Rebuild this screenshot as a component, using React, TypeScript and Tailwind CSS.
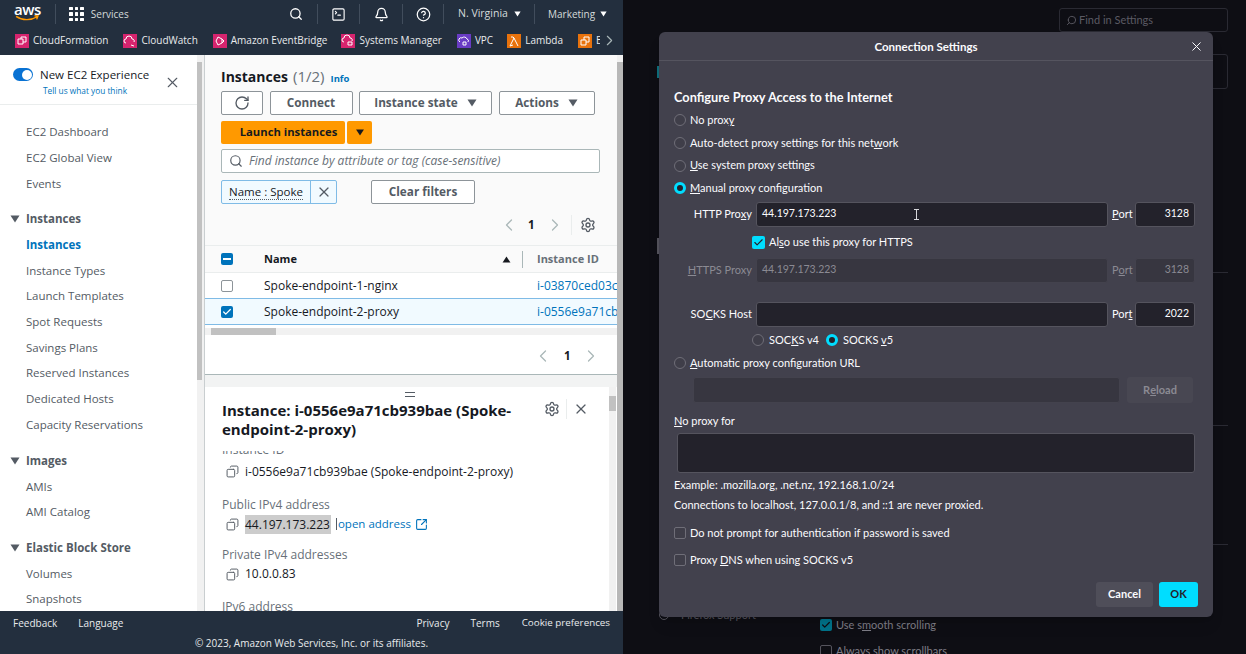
import React from "react";
import { RotateCw, Search, X, ChevronLeft, ChevronRight, Settings, Copy, SquareArrowOutUpRight, SquareTerminal, Bell, CircleHelp, Check } from "lucide-react";

const Caret = ({ className = "" }: { className?: string }) => (
  <svg viewBox="0 0 10 8" className={className} fill="currentColor"><path d="M0.5 0.5h9L5 7.5z" /></svg>
);

const Fav = ({ bg, label, mr = "mr-[15px]", shape }: { bg: string; label: string; mr?: string; shape: string }) => (
  <div className={`flex items-center shrink-0 ${mr}`}>
    <span className={`w-[14px] h-[14px] flex items-center justify-center mr-[4px] ${bg}`}>
      <svg viewBox="0 0 14 14" className="w-[14px] h-[14px]" fill="none" stroke="#fff" strokeWidth="1"><path d={shape} /></svg>
    </span>
    <span>{label}</span>
  </div>
);

const NavItem = ({ t }: { t: string }) => <div className="h-[25.7px] flex items-center pl-[26px] text-[#545b64]">{t}</div>;
const NavHead = ({ t, mt }: { t: string; mt: string }) => (
  <div className={`h-[25.7px] flex items-center pl-[10px] font-bold text-[#545b64] ${mt}`}>
    <Caret className="w-[10px] h-[8px] mr-[6px] text-[#545b64]" />
    {t}
  </div>
);

const Btn = ({ w, children }: { w: string; children: React.ReactNode }) => (
  <div className={`h-[24px] ${w} bg-white border border-[#8d9499] rounded-[2px] flex items-center justify-center font-bold text-[#545b64] text-[11.75px]`}>{children}</div>
);

const Radio = ({ on = false }: { on?: boolean }) =>
  on ? (
    <span className="w-[12px] h-[12px] rounded-full border-[3.5px] border-[#00ddff] bg-[#23222b] shrink-0 inline-block" />
  ) : (
    <span className="w-[12px] h-[12px] rounded-full border border-[#6f6e78] bg-[#3f3e49] shrink-0 inline-block" />
  );

const Chk = () => <span className="w-[12px] h-[12px] rounded-[2px] border border-[#6f6e78] bg-[#3f3e49] shrink-0 inline-block" />;

const Opt = ({ h, children, on }: { h: string; children: React.ReactNode; on?: boolean }) => (
  <div className={`flex items-center gap-[4px] ${h}`}><Radio on={on} /><span>{children}</span></div>
);

const Field = ({ dim, children, right }: { dim?: boolean; children?: React.ReactNode; right?: boolean }) => (
  <div className={`h-full rounded-[3px] border text-[10.5px] flex items-center px-[5px] ${right ? "justify-end" : ""} ${dim ? "bg-[#373640] border-[#43424d] text-[#8b8a93]" : "bg-[#23222b] border-[#55545e] text-[#fbfbfe]"}`}>{children}</div>
);

const ProxyRow = ({ portLabel, mt, label, value, port, dim, cursor }: { portLabel: React.ReactNode; mt: string; label: React.ReactNode; value?: string; port: string; dim?: boolean; cursor?: boolean }) => (
  <div className={`flex items-stretch h-[25px] ${mt} pl-[15px] ${dim ? "text-[#8b8a93]" : ""}`}>
    <div className="w-[78px] flex items-center justify-end mr-[4px] whitespace-nowrap">{label}</div>
    <div className="w-[352px] relative">
      <Field dim={dim}>{value}</Field>
      {cursor && (
        <svg viewBox="0 0 7 11" className="absolute left-[157px] top-[7px] w-[7px] h-[11px]" fill="none" stroke="#d8d8dc" strokeWidth="1"><path d="M1 .5h5M3.5 .5v10M1 10.5h5" /></svg>
      )}
    </div>
    <div className="w-[27px] flex items-center pl-[4px]">{portLabel}</div>
    <div className="w-[60px]"><Field dim={dim} right>{port}</Field></div>
  </div>
);

const Sep = () => <div className="w-px h-[20px] bg-[#414d5c] shrink-0" />;

export default function App() {
  return (
    <div className="relative flex w-[1246px] h-[654px] overflow-hidden bg-[#0e0e14] font-['Open_Sans',sans-serif]">
      {/* AWS console */}
      <div className="w-[623px] h-[654px] flex flex-col shrink-0">
        <div className="h-[28px] bg-[#232f3e] flex items-center text-[#d5dbdb] text-[10px] relative">
          <div className="w-[55px] pl-[14px] relative h-full">
            <span className="block text-white text-[15px] leading-[15px] font-semibold tracking-[-0.5px] mt-[2px]">aws</span>
            <svg viewBox="0 0 28 8" className="absolute left-[14px] top-[15px] w-[27px] h-[7px]" fill="none" stroke="#ff9900" strokeWidth="1.6"><path d="M1 1.5c7 5 17 5 24 0.5M22 0.8l4 0.2-1.5 4" /></svg>
          </div>
          <Sep />
          <div className="grid grid-cols-3 gap-[2px] ml-[13px] mr-[7px]">
            {Array.from({ length: 9 }).map((_, i) => <span key={i} className="w-[3.6px] h-[3.6px] bg-white rounded-[0.5px]" />)}
          </div>
          <span>Services</span>
          <div className="ml-auto flex items-center h-full text-white w-[334px]">
            <Search size={14} strokeWidth={2.2} className="mr-[14px] shrink-0" />
            <Sep />
            <div className="w-[41px] flex justify-center"><SquareTerminal size={15} strokeWidth={1.8} /></div>
            <Sep />
            <div className="w-[42px] flex justify-center"><Bell size={15} strokeWidth={2} /></div>
            <Sep />
            <div className="w-[40px] flex justify-center"><CircleHelp size={15} strokeWidth={2} /></div>
            <Sep />
            <div className="w-[90px] flex items-center pl-[14px]">
              <span className="text-[#d5dbdb] text-[10.5px] whitespace-nowrap">N. Virginia</span>
              <Caret className="w-[7px] h-[6px] ml-[6px]" />
            </div>
            <Sep />
            <div className="flex items-center pl-[13px]">
              <span className="text-[#d5dbdb]">Marketing</span>
              <Caret className="w-[7px] h-[6px] ml-[5px]" />
            </div>
          </div>
        </div>
        <div className="h-[27px] bg-[#232f3e] flex items-center pl-[15px] text-[#e9ebed] text-[10px] relative overflow-hidden pb-[2px]">
          <Fav bg="bg-[#d6246e]" label="CloudFormation" shape="M3 10V5h5v5zM6 5V3h5v5H8" />
          <Fav bg="bg-[#d6246e]" label="CloudWatch" shape="M3 9a2 2 0 010-4 3 3 0 016 0 2 2 0 012 3M8 11l3 1" />
          <Fav bg="bg-[#d6246e]" label="Amazon EventBridge" mr="mr-[14px]" shape="M5 3l4 2v4l-4 2-2-4zM9 5l2 2-2 2" />
          <Fav bg="bg-[#d6246e]" label="Systems Manager" shape="M3 8a2 2 0 010-4 3 3 0 016 0 2 2 0 012 3M7 8h4v3H7z" />
          <Fav bg="bg-[#693cc5]" label="VPC" mr="mr-[14px]" shape="M3 8a2 2 0 012-4 3 3 0 015 1 2 2 0 011 3M6 8h3v3H6z" />
          <Fav bg="bg-[#e8720c]" label="Lambda" shape="M3 12l4-8-1-1H4M7 4l4 8M3 12l3-1" />
          <div className="w-[22px] shrink-0 flex items-center overflow-hidden">
            <span className="w-[14px] h-[14px] bg-[#e8720c] shrink-0 flex items-center justify-center mr-[4px]">
              <svg viewBox="0 0 14 14" className="w-[14px] h-[14px]" fill="none" stroke="#fff"><path d="M3 6h5v5H3zM6 6V3h5v5H8" /></svg>
            </span>
            <span>E</span>
          </div>
          <ChevronRight size={17} strokeWidth={1.6} className="text-[#aab7b8] ml-[1px] shrink-0" />
        </div>

        <div className="h-[556px] flex bg-white overflow-hidden">
          {/* side nav */}
          <div className="w-[197px] shrink-0 text-[11.5px] overflow-hidden">
            <div className="h-[50px] border-b border-[#eaeded] relative">
              <span className="absolute left-[13px] top-[13px] w-[20px] h-[13px] rounded-full bg-[#0972d3]">
                <span className="absolute right-[1.5px] top-[1.5px] w-[10px] h-[10px] rounded-full bg-white" />
              </span>
              <div className="absolute left-[40px] top-[12px] text-[11.5px] leading-[16px] text-[#16191f] whitespace-nowrap">New EC2 Experience</div>
              <div className="absolute left-[43px] top-[30px] text-[8.3px] leading-[12px] text-[#0073bb] whitespace-nowrap">Tell us what you think</div>
              <X size={17} strokeWidth={1.6} className="absolute left-[164px] top-[19px] text-[#545b64]" />
            </div>
            <div className="pt-[14px]">
              <NavItem t="EC2 Dashboard" />
              <NavItem t="EC2 Global View" />
              <NavItem t="Events" />
              <NavHead t="Instances" mt="mt-[10px]" />
              <div className="h-[25.7px] flex items-center pl-[26px] font-bold text-[#0073bb]">Instances</div>
              <NavItem t="Instance Types" />
              <NavItem t="Launch Templates" />
              <NavItem t="Spot Requests" />
              <NavItem t="Savings Plans" />
              <NavItem t="Reserved Instances" />
              <NavItem t="Dedicated Hosts" />
              <NavItem t="Capacity Reservations" />
              <NavHead t="Images" mt="mt-[10.5px]" />
              <NavItem t="AMIs" />
              <NavItem t="AMI Catalog" />
              <NavHead t="Elastic Block Store" mt="mt-[10px]" />
              <NavItem t="Volumes" />
              <NavItem t="Snapshots" />
            </div>
          </div>
          {/* nav scrollbar */}
          <div className="w-[7px] shrink-0 bg-[#f1f1f1] pt-[7px] pr-[2px]">
            <div className="h-[318px] bg-[#c1c1c1]" />
          </div>
          {/* main */}
          <div className="w-[413px] shrink-0 flex flex-col border-l border-[#c9ced0]">
            <div className="h-[319px] bg-[#fafafa] shrink-0 overflow-hidden">
              <div className="pl-[16px] pt-[12px] h-[36px] flex items-baseline">
                <span className="text-[14px] leading-[18px] font-bold text-[#16191f]">Instances</span>
                <span className="text-[15px] leading-[18px] text-[#687078] ml-[5px]">(1/2)</span>
                <span className="text-[9.5px] font-bold text-[#0073bb] ml-[6px]">Info</span>
              </div>
              <div className="pl-[16px] flex gap-[6.5px]">
                <Btn w="w-[42px]"><RotateCw size={16} strokeWidth={2} /></Btn>
                <Btn w="w-[83px]">Connect</Btn>
                <Btn w="w-[133px]">Instance state<Caret className="w-[10px] h-[8px] ml-[9px]" /></Btn>
                <Btn w="w-[96px]">Actions<Caret className="w-[10px] h-[8px] ml-[9px]" /></Btn>
              </div>
              <div className="pl-[16px] flex gap-[2px] mt-[6px]">
                <div className="h-[23px] w-[124px] bg-[#ff9900] rounded-[2px] flex items-center justify-center pl-[11px] font-bold text-[#16191f] text-[11.25px]">Launch instances</div>
                <div className="h-[23px] w-[25px] bg-[#ff9900] rounded-[2px] flex items-center justify-center text-[#16191f]"><Caret className="w-[10px] h-[7px]" /></div>
              </div>
              <div className="ml-[16px] mt-[5px] w-[379px] h-[24px] bg-white border border-[#aab7b8] rounded-[2px] flex items-center pl-[7px]">
                <Search size={14} strokeWidth={2} className="text-[#545b64] mr-[6px]" />
                <span className="italic text-[12px] text-[#687078] whitespace-nowrap">Find instance by attribute or tag (case-sensitive)</span>
              </div>
              <div className="pl-[16px] mt-[7px] flex items-center">
                <div className="h-[24px] w-[116px] flex bg-[#f1faff] border border-[#7fbbe6] rounded-[2px]">
                  <div className="w-[89px] flex items-center justify-center border-r border-[#7fbbe6] text-[#16191f] text-[11.5px]"><span className="border-b border-dotted border-[#545b64] leading-[14px]">Name : Spoke</span></div>
                  <div className="flex-1 flex items-center justify-center text-[#545b64]"><X size={16} strokeWidth={1.8} /></div>
                </div>
                <div className="ml-[34px]"><Btn w="w-[104px]">Clear filters</Btn></div>
              </div>
              <div className="h-[42px] flex items-center pl-[294px] text-[#aab7b8]">
                <ChevronLeft size={20} strokeWidth={1.5} />
                <span className="text-[#16191f] font-bold text-[11.5px] ml-[9px] w-[6px]">1</span>
                <ChevronRight size={20} strokeWidth={1.5} className="ml-[11px]" />
                <div className="w-px h-[20px] bg-[#eaeded] ml-[6px] mr-[8px]" />
                <Settings size={16} strokeWidth={2} className="text-[#545b64]" />
              </div>
              <div className="h-[27px] flex items-center border-t border-[#eaeded] text-[11px] font-bold mt-[-1px] bg-[#fafafa]">
                <span className="ml-[16px] w-[12px] h-[12px] bg-[#0073bb] rounded-[2px] flex items-center justify-center"><span className="w-[8px] h-[2px] bg-white" /></span>
                <span className="ml-[31px] text-[#16191f] w-[238px]">Name</span>
                <Caret className="w-[9px] h-[7px] text-[#16191f] rotate-180" />
                <div className="w-px h-[17px] bg-[#aab7b8] ml-[11px] mr-[14px]" />
                <span className="text-[#687078] whitespace-nowrap">Instance ID</span>
              </div>
              <div className="bg-white text-[12px] text-[#16191f]">
                <div className="h-[26px] flex items-center overflow-hidden whitespace-nowrap border-t border-[#eaeded]">
                  <span className="ml-[16px] w-[12px] h-[12px] bg-white border border-[#8d9499] rounded-[2px] shrink-0" />
                  <span className="ml-[31px] w-[273px] shrink-0">Spoke-endpoint-1-nginx</span>
                  <span className="text-[#0073bb]">i-03870ced03c</span>
                </div>
                <div className="h-[27px] flex items-center overflow-hidden whitespace-nowrap bg-[#f1faff] border-y border-[#7fbbe6]">
                  <span className="ml-[16px] w-[12px] h-[12px] bg-[#0073bb] rounded-[2px] shrink-0 flex items-center justify-center text-white"><Check size={10} strokeWidth={3} /></span>
                  <span className="ml-[31px] w-[273px] shrink-0">Spoke-endpoint-2-proxy</span>
                  <span className="text-[#0073bb]">i-0556e9a71cb</span>
                </div>
              </div>
              <div className="h-[12px] bg-white flex items-center">
                <div className="w-full h-[7px] bg-[#f1f1f1] pl-[6px]"><div className="w-[65px] h-[7px] bg-[#c1c1c1]" /></div>
              </div>
              <div className="h-[37px] bg-white flex items-center pl-[328px] text-[#aab7b8]">
                <ChevronLeft size={20} strokeWidth={1.5} />
                <span className="text-[#16191f] font-bold text-[11.5px] ml-[11px] w-[6px]">1</span>
                <ChevronRight size={20} strokeWidth={1.5} className="ml-[11px]" />
              </div>
            </div>
            <div className="h-[13px] shrink-0 bg-[#f2f3f3] border-t border-[#aab7b8]" />
            <div className="flex-1 bg-white relative overflow-hidden">
              <div className="h-[5px] w-[10px] border-y border-[#545b64] mx-auto mt-[5px] mb-[4px] translate-x-[-1px]" />
              <div className="absolute right-[28px] top-[12px] flex items-center text-[#545b64]">
                <Settings size={16} strokeWidth={2} />
                <div className="w-px h-[20px] bg-[#eaeded] mx-[6px]" />
                <X size={16} strokeWidth={1.8} />
              </div>
              <div className="pl-[17px] pr-[90px] text-[15px] leading-[19px] font-bold text-[#16191f] h-[50px]">Instance: i-0556e9a71cb939bae (Spoke-endpoint-2-proxy)</div>
              <div className="h-[165px] overflow-hidden pl-[17px] text-[12px] text-[#16191f] relative">
                <div className="absolute left-[17px] top-[-4px] h-[8px] overflow-hidden"><div className="mt-[-6px] text-[#687078]">Instance ID</div></div>
                <div className="pt-[12px] h-[46px] flex items-start"><Copy size={13} strokeWidth={1.8} className="text-[#545b64] ml-[4px] mr-[6px] mt-[2px] scale-x-[-1]" /><span className="text-[#16191f]">i-0556e9a71cb939bae (Spoke-endpoint-2-proxy)</span></div>
                <div className="text-[#687078] h-[16px] leading-[16px]">Public IPv4 address</div>
                <div className="flex items-center h-[22px]">
                  <Copy size={13} strokeWidth={1.8} className="text-[#545b64] ml-[4px] mr-[6px] scale-x-[-1]" />
                  <span className="bg-[#cccccc] h-[19px] leading-[19px] text-[#16191f] pr-[1px]">44.197.173.223</span>
                  <span className="w-px h-[12px] bg-[#545b64] ml-[5px] mr-[1px]" />
                  <span className="text-[#0073bb] text-[11.5px]">open address</span>
                  <SquareArrowOutUpRight size={13} strokeWidth={2} className="text-[#0073bb] ml-[4px]" />
                </div>
                <div className="text-[#687078] h-[16px] leading-[16px] mt-[12px]">Private IPv4 addresses</div>
                <div className="flex items-center h-[22px]">
                  <Copy size={13} strokeWidth={1.8} className="text-[#545b64] ml-[4px] mr-[6px] scale-x-[-1]" />
                  <span>10.0.0.83</span>
                </div>
                <div className="text-[#687078] h-[16px] leading-[16px] mt-[14px]">IPv6 address</div>
              </div>
              <div className="absolute right-[1px] top-0 bottom-0 w-[7px] bg-[#f1f1f1] pt-[9px]"><div className="h-[15px] bg-[#c1c1c1]" /></div>
            </div>
          </div>
          <div className="w-[6px] shrink-0 bg-[#f1f1f1] pt-[7px]"><div className="h-[552px] bg-[#b8b8b8]" /></div>
        </div>

        <div className="h-[43px] bg-[#232f3e] text-[#e9ebed] text-[10px] relative">
          <div className="h-[24px] flex items-center pl-[13px]">
            <span>Feedback</span>
            <span className="ml-[21px]">Language</span>
            <span className="ml-auto">Privacy</span>
            <span className="ml-[21px]">Terms</span>
            <span className="ml-[22px] mr-[13px] text-[9.8px]">Cookie preferences</span>
          </div>
          <div className="text-center leading-[17px]">© 2023, Amazon Web Services, Inc. or its affiliates.</div>
        </div>
      </div>

      {/* Firefox background */}
      <div className="flex-1 relative text-[11px] font-['Lato',sans-serif] text-[#6f6e78]">
        <div className="absolute left-[436px] top-[8px] w-[169px] h-[24px] rounded-[3px] border border-[#2a2a33] flex items-center pl-[6px] text-[#5b5a63]">
          <Search size={11} className="scale-x-[-1] mr-[2px]" />Find in Settings
        </div>
        <div className="absolute left-[420px] top-[54px] w-[185px] h-[35px] rounded-[3px] border border-[#2a2a33]" />
        <div className="absolute left-[34px] top-[66px] w-[2px] h-[12px] bg-[#0f6f7d]" />
        <div className="absolute left-[34px] top-[238px] w-[2px] h-[16px] bg-[#55545d]" />
        <div className="absolute left-[590px] top-[272px] w-[15px] h-px bg-[#2a2a33]" />
        <div className="absolute left-[590px] top-[425px] w-[15px] h-px bg-[#2a2a33]" />
        <div className="absolute left-[590px] top-[544px] w-[15px] h-px bg-[#2a2a33]" />
        <div className="absolute left-[36px] top-[607px] flex items-center gap-[12px] text-[#55545d] whitespace-nowrap">
          <span className="w-[10px] h-[10px] rounded-full border border-[#55545d]" />Firefox Support
        </div>
        <div className="absolute left-[197px] top-[617px] flex items-center gap-[4px] whitespace-nowrap text-[#7e7d86]">
          <span className="w-[12px] h-[12px] rounded-[2px] bg-[#00738a] flex items-center justify-center text-[#0e0e14]"><Check size={10} strokeWidth={3} /></span>
          <span>Use s<u>m</u>ooth scrolling</span>
        </div>
        <div className="absolute left-[197px] top-[643px] flex items-center gap-[4px] whitespace-nowrap text-[#7e7d86]">
          <span className="w-[12px] h-[12px] rounded-[2px] border border-[#55545d]" />
          <span>Always show scrollbars</span>
        </div>
      </div>

      {/* Connection Settings dialog */}
      <div className="absolute left-[659px] top-[32px] w-[554px] h-[585px] bg-[#42414d] rounded-[6px] shadow-lg text-[#fbfbfe] text-[11px] font-['Lato',sans-serif]">
        <div className="h-[29px] border-b border-[#55545f] flex items-center justify-center pr-[20px] pt-[1px] relative font-bold text-[11.5px]">
          Connection Settings
          <X size={15} strokeWidth={1.6} className="absolute right-[9px] top-[7px]" />
        </div>
        <div className="pl-[15px] pr-[18px]">
          <div className="pt-[27px] h-[48px] leading-[18px] font-bold text-[12.75px]">Configure Proxy Access to the Internet</div>
        </div>
        <div className="pl-[15px]">
          <Opt h="h-[22.7px]">No prox<u>y</u></Opt>
          <Opt h="h-[22.7px]">Auto-detect proxy settings for this net<u>w</u>ork</Opt>
          <Opt h="h-[22.7px]"><u>U</u>se system proxy settings</Opt>
          <Opt h="h-[22.7px]" on><u>M</u>anual proxy configuration</Opt>
        </div>
        <ProxyRow mt="mt-[2px]" label={<>HTTP Pro<u>x</u>y</>} value="44.197.173.223" port="3128" portLabel={<><u>P</u>ort</>} cursor />
        <div className="flex items-center gap-[4px] pl-[93px] h-[31px]">
          <span className="w-[13px] h-[13px] rounded-[2px] bg-[#00ddff] flex items-center justify-center text-[#23222b]"><Check size={11} strokeWidth={2.5} /></span>
          <span>Al<u>s</u>o use this proxy for HTTPS</span>
        </div>
        <ProxyRow mt="mt-0" dim label={<><u>H</u>TTPS Proxy</>} value="44.197.173.223" port="3128" portLabel={<>P<u>o</u>rt</>} />
        <ProxyRow mt="mt-[19px]" label={<>SO<u>C</u>KS Host</>} port="2022" portLabel={<>Por<u>t</u></>} />
        <div className="flex items-center pl-[93px] h-[26px]">
          <Radio />
          <span className="ml-[5px]">SOC<u>K</u>S v4</span>
          <span className="ml-[7px] flex"><Radio on /></span>
          <span className="ml-[5px]">SOCKS <u>v</u>5</span>
        </div>
        <div className="pl-[15px]"><Opt h="h-[20px]"><u>A</u>utomatic proxy configuration URL</Opt></div>
        <div className="flex pl-[34px] h-[26px] mt-[4px]">
          <div className="w-[427px]"><Field dim /></div>
          <div className="ml-[7px] w-[66px] rounded-[3px] bg-[#484752] text-[#8b8a93] flex items-center justify-center font-bold">R<u>e</u>load</div>
        </div>
        <div className="pl-[15px] mt-[10px] h-[20px] leading-[16px]"><u>N</u>o proxy for</div>
        <div className="ml-[18px] w-[518px] h-[40px] bg-[#23222b] border border-[#55545e] rounded-[3px]" />
        <div className="pl-[15px] mt-[4px] h-[20px] leading-[16px]">Example: .mozilla.org, .net.nz, 192.168.1.0/24</div>
        <div className="pl-[15px] h-[20px] leading-[16px]">Connections to localhost, 127.0.0.1/8, and ::1 are never proxied.</div>
        <div className="pl-[15px] mt-[3px] h-[27px] flex items-center gap-[4px]"><Chk /><span>Do not prompt for authent<u>i</u>cation if password is saved</span></div>
        <div className="pl-[15px] h-[26px] flex items-center gap-[4px]"><Chk /><span>Proxy <u>D</u>NS when using SOCKS v5</span></div>
        <div className="flex justify-end gap-[6px] pr-[15px] mt-[9px]">
          <div className="w-[57px] h-[25px] rounded-[3px] bg-[#4f4e59] flex items-center justify-center font-bold">Cancel</div>
          <div className="w-[39px] h-[25px] rounded-[3px] bg-[#00ddff] text-[#23222b] flex items-center justify-center font-bold">OK</div>
        </div>
      </div>
    </div>
  );
}
